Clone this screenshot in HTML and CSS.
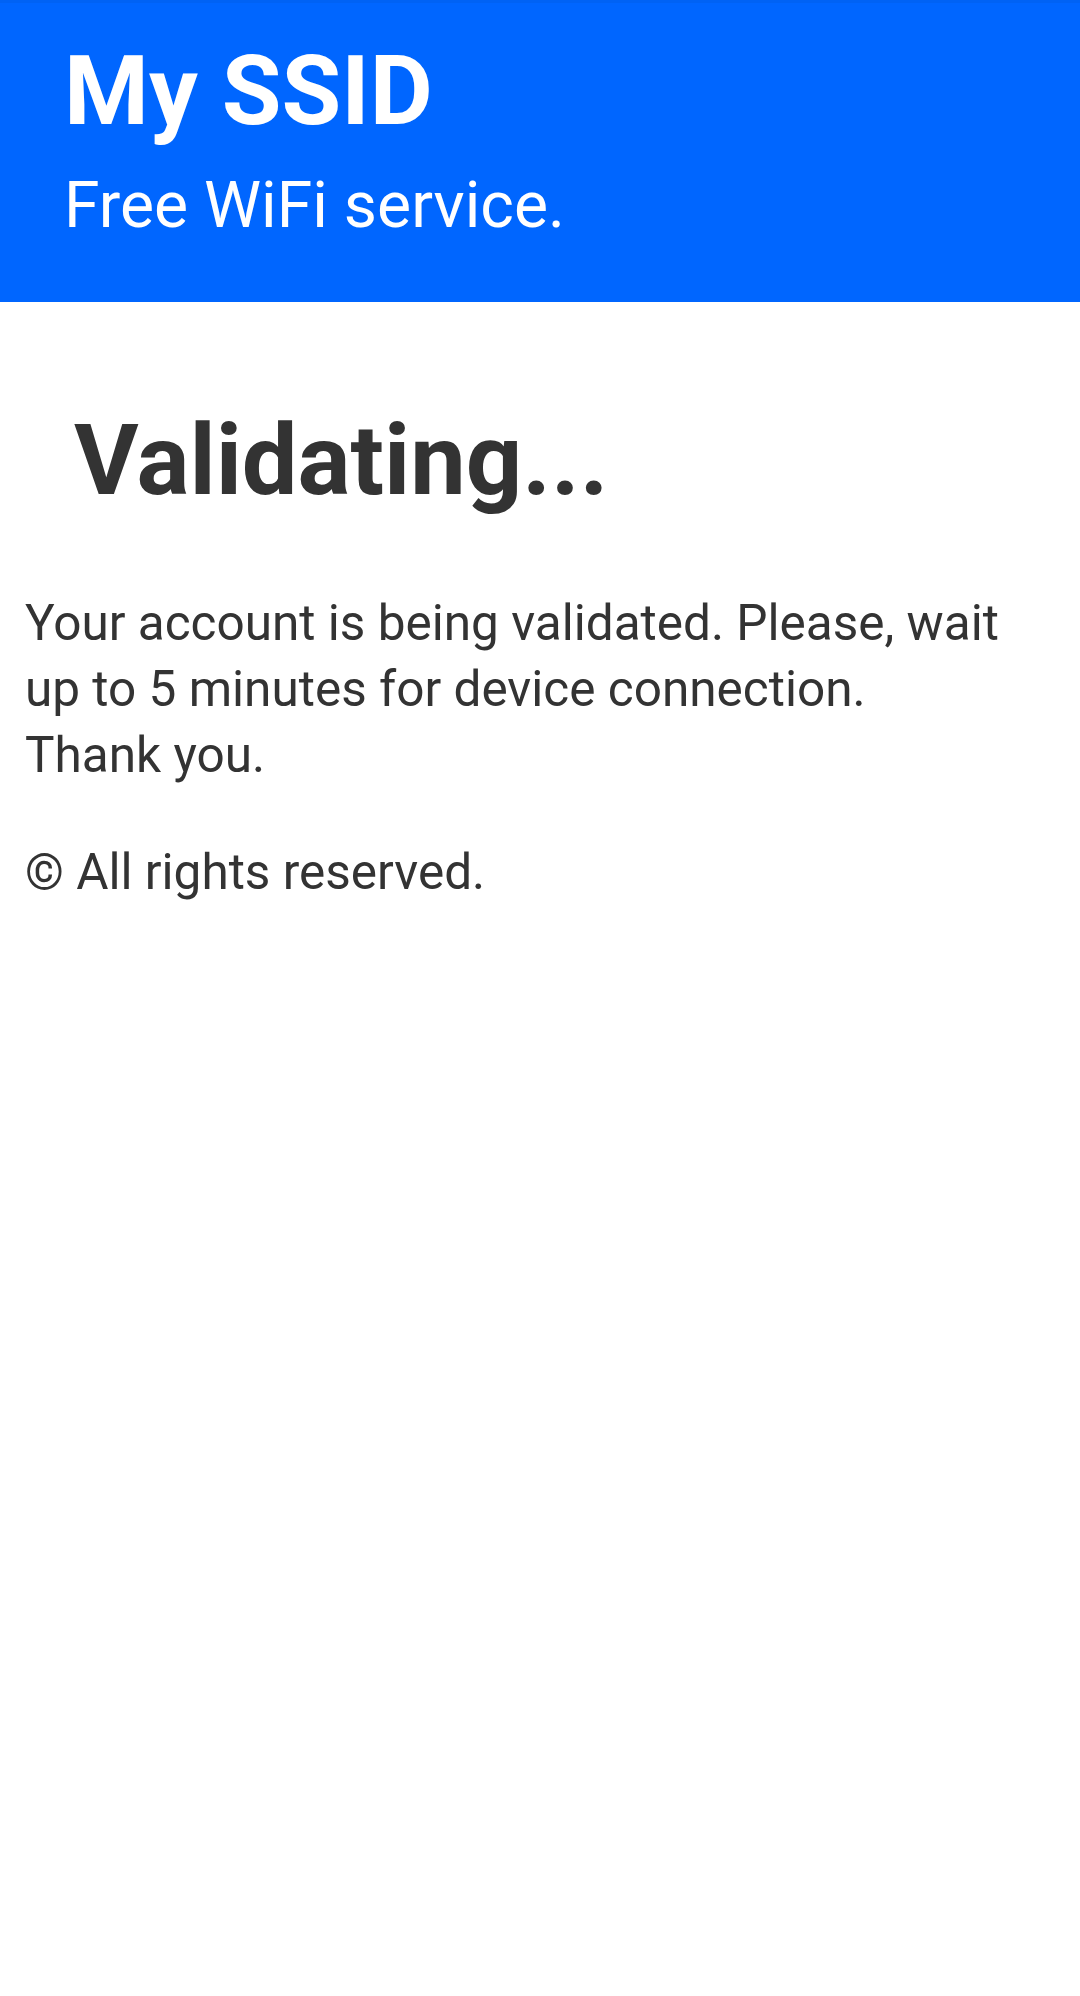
FILE: index.html
```html
<!DOCTYPE html>
<html lang="en">
<head>
<meta charset="utf-8">
<title>My SSID</title>
<link rel="stylesheet" href="styles.css">
</head>
<body>
<header class="banner">
  <h1 class="brand">My SSID</h1>
  <p class="tagline">Free WiFi service.</p>
</header>
<main class="content">
  <h2 class="status">Validating...</h2>
  <p class="message">Your account is being validated. Please, wait up to 5 minutes for device connection.<br>Thank you.</p>
  <p class="footer">© All rights reserved.</p>
</main>
</body>
</html>
```

FILE: styles.css
```css
html, body {
  margin: 0;
  padding: 0;
  background: #fff;
}
body {
  font-family: Roboto, "Liberation Sans", sans-serif;
  color: #333;
}
.banner {
  background: #0066ff;
  box-shadow: inset 0 3px 0 #0062f4;
  height: 302px;
  box-sizing: border-box;
  padding: 39px 60px 0 64px;
  color: #fff;
}
.brand {
  margin: 0;
  font-size: 97px;
  font-weight: 700;
  line-height: 104px;
}
.tagline {
  margin: 0;
  margin-top: 27px;
  font-size: 64.3px;
  font-weight: 400;
  line-height: 70px;
}
.content {
  padding: 0 25px;
}
.status {
  margin: 0;
  padding: 103px 0 0 49px;
  font-size: 99px;
  font-weight: 700;
  line-height: 110px;
}
.message {
  margin: 0;
  margin-top: 75px;
  font-size: 49.5px;
  line-height: 66px;
}
.footer {
  margin: 0;
  margin-top: 51px;
  font-size: 49.5px;
  line-height: 66px;
}
```
